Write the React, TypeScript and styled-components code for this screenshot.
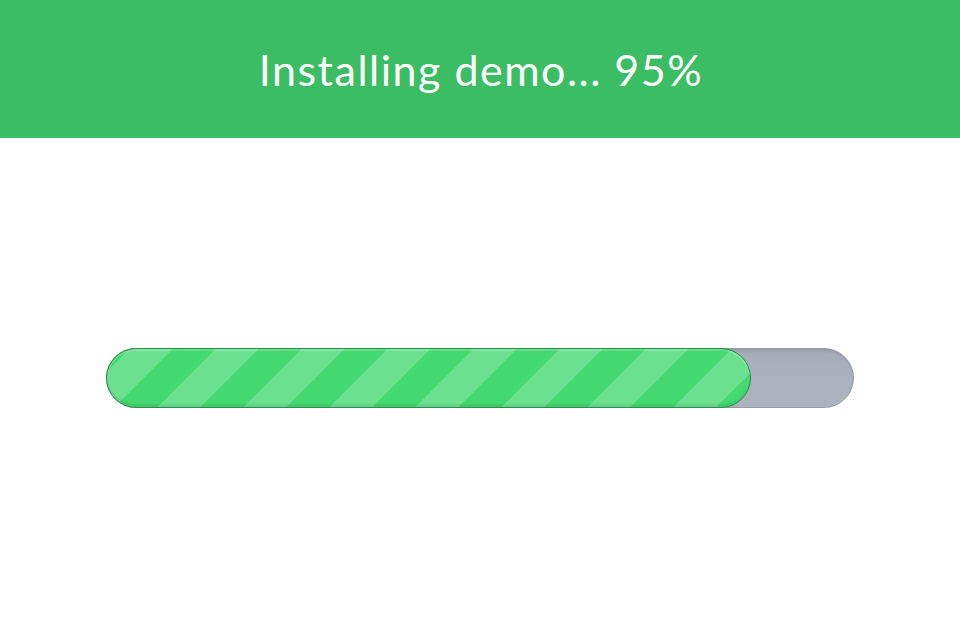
import React from 'react';
import styled, {createGlobalStyle} from 'styled-components';

const GlobalStyle = createGlobalStyle`
  html, body {
    margin: 0;
    padding: 0;
    background: #fff;
    font-family: Lato, "Open Sans", sans-serif;
  }
`;

const Page = styled.div`
  width: 960px;
  height: 640px;
  display: flex;
  flex-direction: column;
  background: #fff;
`;

const Header = styled.header`
  height: 138px;
  flex-shrink: 0;
  display: flex;
  align-items: center;
  justify-content: center;
  background-color: #3bbd63;
`;

const Title = styled.h1`
  margin: 0 0 0 2px;
  color: #fff;
  font-size: 43px;
  font-weight: 400;
  letter-spacing: 1.5px;
`;

const Body = styled.main`
  display: flex;
  justify-content: center;
  padding-top: 210px;
`;

const Track = styled.div`
  width: 748px;
  height: 60px;
  box-sizing: border-box;
  border-radius: 30px;
  border: 1px solid #959aa4;
  background: linear-gradient(#a4aab5 0%, #abb1bc 30%, #adb3be 100%);
  box-shadow: inset 0 2px 2px rgba(0, 0, 0, 0.08);
  display: flex;
`;

const Fill = styled.div<{$pct: number}>`
  width: ${p => p.$pct}%;
  height: 60px;
  flex-shrink: 0;
  box-sizing: border-box;
  border-radius: 30px;
  border: 1px solid #2f8b49;
  margin: -1px 0 0 -1px;
  background-color: #44d870;
  background-image: linear-gradient(
    135deg,
    #6be18f 25%,
    #44d870 25%,
    #44d870 50%,
    #6be18f 50%,
    #6be18f 75%,
    #44d870 75%
  );
  background-size: 86px 86px;
  background-position: 22px 1px;
  box-shadow: inset 0 2px 0 rgba(255, 255, 255, 0.18),
    inset 0 -3px 0 rgba(0, 0, 0, 0.06);
`;

class App extends React.Component {
  render() {
    return (
      <Page>
        <GlobalStyle />
        <Header>
          <Title>Installing demo... 95%</Title>
        </Header>
        <Body>
          <Track>
            <Fill $pct={86.4} />
          </Track>
        </Body>
      </Page>
    );
  }
}

export default App;
